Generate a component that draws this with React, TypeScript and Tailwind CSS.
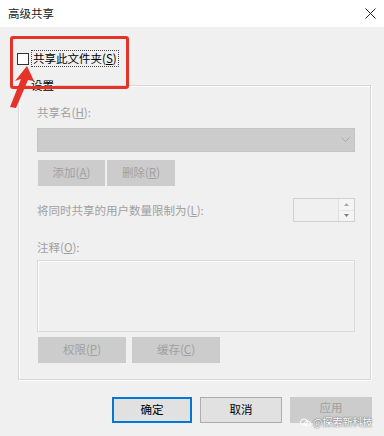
import React from 'react';

const font = { fontFamily: '"Noto Sans CJK SC", "Microsoft YaHei", sans-serif' };

const DisabledBtn: React.FC<{ label: string; k: string; w: string }> = ({ label, k, w }) => (
  <div className={`${w} h-[26px] bg-[#cccccc] flex items-center justify-center text-[11.5px] text-[#a0a0a0]`}>
    {label}(<u>{k}</u>)
  </div>
);

export default function App() {
  return (
    <div className="relative w-[384px] h-[436px] bg-[#f0f0f0] overflow-hidden text-black" style={font}>
      {/* Title bar */}
      <div className="h-[27px] bg-white flex items-center justify-between pl-[8px] pr-[5px]">
        <span className="text-[11.5px] leading-none text-[#222]">高级共享</span>
        <svg width="11" height="11" viewBox="0 0 11 11" className="mr-[3px]">
          <path d="M0.5 0.5 L10.5 10.5 M10.5 0.5 L0.5 10.5" stroke="#222" strokeWidth="1" />
        </svg>
      </div>

      {/* Share checkbox */}
      <div className="flex items-center pl-[17px] pt-[23px] h-[40px]">
        <div className="w-[12px] h-[12px] border border-[#333] bg-white" />
        <span className="ml-[2px] px-[1px] border border-dotted border-[#444] text-[11.5px] leading-[15px]">
          共享此文件夹(<u>S</u>)
        </span>
      </div>

      {/* Settings group */}
      <div className="relative mt-[18px] ml-[18px] w-[353px] h-[295px] border border-[#d6d6d6] shadow-[inset_1px_1px_0_#ffffff,1px_1px_0_#ffffff] pl-[18px] pr-[15px]">
        <span className="absolute left-[11px] -top-[8px] px-[1px] bg-[#f0f0f0] text-[11.5px] leading-[15px]">设置</span>

        <div className="pt-[19px] text-[11.5px] leading-[15px] text-[#a0a0a0]">共享名(<u>H</u>):</div>
        <div className="mt-[8px] h-[24px] bg-[#cccccc] border border-[#c4c4c4] flex items-center justify-end pr-[4px]">
          <svg width="9" height="6" viewBox="0 0 9 6">
            <path d="M0.5 0.5 L4.5 4.5 L8.5 0.5" fill="none" stroke="#a8a8a8" strokeWidth="1" />
          </svg>
        </div>
        <div className="mt-[8px] flex gap-[2px] pl-[1px]">
          <DisabledBtn label="添加" k="A" w="w-[67px]" />
          <DisabledBtn label="删除" k="R" w="w-[68px]" />
        </div>

        <div className="mt-[12px] flex items-center justify-between">
          <span className="text-[11.5px] text-[#a0a0a0] mt-[1px]">将同时共享的用户数量限制为(<u>L</u>):</span>
          <div className="w-[62px] h-[24px] border border-[#d0d0d0] bg-[#f0f0f0] flex justify-end">
            <div className="w-[16px] h-full border-l border-[#e0e0e0] flex flex-col">
              <div className="flex-1 bg-[#f4f4f4] flex items-center justify-center border-b border-[#e6e6e6]">
                <svg width="5" height="3" viewBox="0 0 5 3"><path d="M0 3 L2.5 0 L5 3 Z" fill="#a8a8a8" /></svg>
              </div>
              <div className="flex-1 bg-[#f4f4f4] flex items-center justify-center">
                <svg width="5" height="3" viewBox="0 0 5 3"><path d="M0 0 L2.5 3 L5 0 Z" fill="#808080" /></svg>
              </div>
            </div>
          </div>
        </div>

        <div className="mt-[18px] text-[11.5px] leading-[15px] text-[#a0a0a0]">注释(<u>O</u>):</div>
        <div className="mt-[5px] h-[72px] border border-[#dadada] shadow-[inset_1px_1px_0_#ffffff] bg-[#f0f0f0]" />
        <div className="mt-[5px] flex gap-[6px] pl-[1px]">
          <DisabledBtn label="权限" k="P" w="w-[88px]" />
          <DisabledBtn label="缓存" k="C" w="w-[88px]" />
        </div>
      </div>

      {/* Dialog buttons */}
      <div className="mt-[17px] flex justify-end gap-[8px] pr-[12px]">
        <div className="w-[80px] h-[26px] bg-[#e1e1e1] border-2 border-[#0078d7] flex items-center justify-center text-[11.5px]">确定</div>
        <div className="w-[82px] h-[26px] bg-[#e1e1e1] border border-[#adadad] flex items-center justify-center text-[11.5px]">取消</div>
        <div className="w-[82px] h-[26px] bg-[#cccccc] flex items-start justify-center pt-[3px] text-[11.5px] leading-[14px] text-[#a0a0a0]">应用</div>
      </div>

      {/* Watermark */}
      <div className="absolute left-[300px] top-[416px] flex items-center gap-[2px] text-[10px] leading-[12px] text-white [text-shadow:0_0_2px_#777,0_0_1px_#555]">
        <svg width="11" height="9" viewBox="0 0 11 9">
          <ellipse cx="4" cy="4" rx="3.5" ry="3" fill="none" stroke="#fff" strokeWidth="1" />
          <ellipse cx="7.5" cy="5.5" rx="3" ry="2.5" fill="none" stroke="#fff" strokeWidth="1" />
        </svg>
        <span>@探索新科技</span>
      </div>

      {/* Red highlight box */}
      <div className="absolute left-[10px] top-[36px] w-[119px] h-[53px] border-[3px] border-[#e53329] rounded-[3px]" />

      {/* Red arrow */}
      <svg className="absolute left-0 top-0" width="50" height="120" viewBox="0 0 50 120">
        <polygon points="27,66 34,81 28,80 16,108 10,107 21,79 15,81" fill="#e53329" />
      </svg>
    </div>
  );
}
